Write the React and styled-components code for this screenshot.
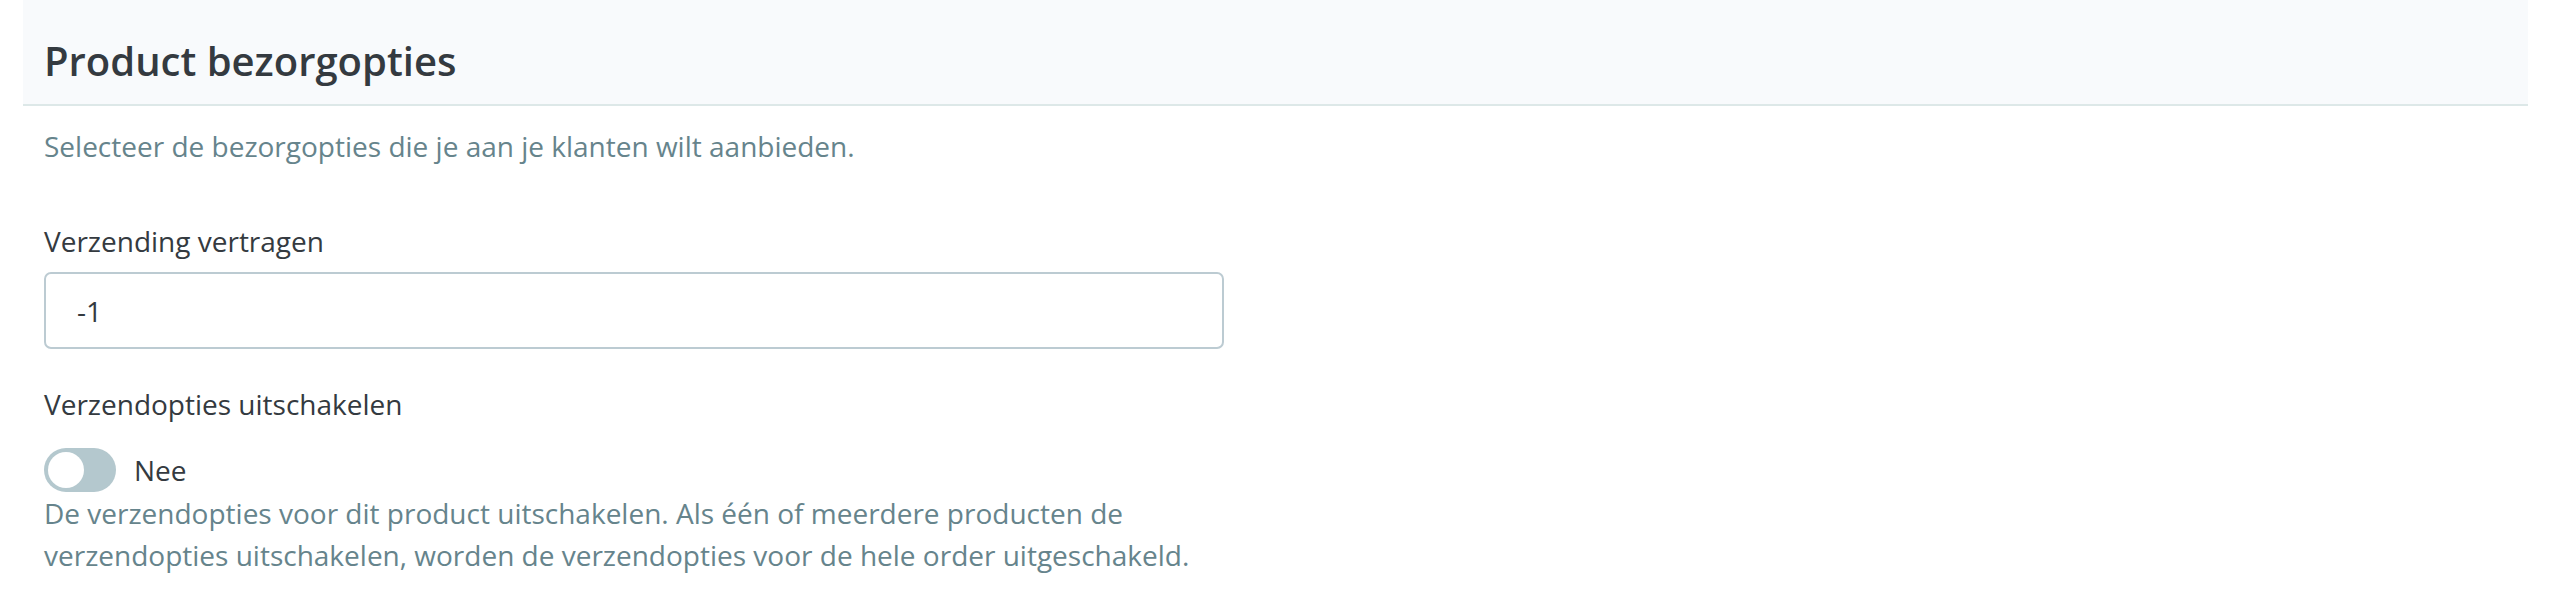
import React, { useState } from "react";
import styled, { createGlobalStyle } from "styled-components";

const GlobalStyle = createGlobalStyle`
  html, body {
    margin: 0;
    padding: 0;
    background: #ffffff;
  }
  body {
    font-family: "Open Sans", "Noto Sans", sans-serif;
    -webkit-font-smoothing: antialiased;
  }
`;

export default function App() {
  const [delay, setDelay] = useState("-1");
  const [disabled, setDisabled] = useState(false);

  return (
    <>
      <GlobalStyle />
      <Page>
        <Panel>
          <Header>
            <Title>Product bezorgopties</Title>
          </Header>
          <Body>
            <Intro>Selecteer de bezorgopties die je aan je klanten wilt aanbieden.</Intro>

            <Field>
              <Label htmlFor="delay">Verzending vertragen</Label>
              <Input
                id="delay"
                value={delay}
                onChange={(e) => setDelay(e.target.value)}
              />
            </Field>

            <Field $gap={23}>
              <Label as="div">Verzendopties uitschakelen</Label>
              <div>
                <ToggleRow>
                  <Toggle
                    type="button"
                    $on={disabled}
                    onClick={() => setDisabled((v) => !v)}
                    aria-pressed={disabled}
                  >
                    <Knob $on={disabled} />
                  </Toggle>
                  <ToggleText>{disabled ? "Ja" : "Nee"}</ToggleText>
                </ToggleRow>
                <Help>
                  De verzendopties voor dit product uitschakelen. Als één of meerdere producten de
                  verzendopties uitschakelen, worden de verzendopties voor de hele order uitgeschakeld.
                </Help>
              </div>
            </Field>
          </Body>
        </Panel>
      </Page>
    </>
  );
}

const Page = styled.div`
  padding: 0 28px 0 23px;
`;

const Panel = styled.section`
  display: flex;
  flex-direction: column;
`;

const Header = styled.div`
  height: 106px;
  box-sizing: border-box;
  padding: 37px 21px 0;
  background: #f8fafc;
  border-bottom: 2px solid #dde8e8;
`;

const Title = styled.h2`
  margin: 0;
  font-size: 40px;
  line-height: 1.2;
  font-weight: 600;
  color: #343a40;
`;

const Body = styled.div`
  display: flex;
  flex-direction: column;
  gap: 34px;
  padding: 19px 21px 0;
  width: 1180px;
`;

const Intro = styled.p`
  margin: 0 0 19px;
  font-size: 28px;
  line-height: 42px;
  color: #66848c;
`;

const Field = styled.div`
  display: flex;
  flex-direction: column;
  gap: ${(p) => p.$gap ?? 10}px;
`;

const Label = styled.label`
  font-size: 28px;
  line-height: 42px;
  color: #343a40;
`;

const Input = styled.input`
  box-sizing: border-box;
  width: 1180px;
  height: 77px;
  padding: 0 31px;
  border: 2px solid #bccbd2;
  border-radius: 7px;
  font-family: inherit;
  font-size: 28px;
  color: #343a40;
  background: #fff;
  outline: none;
`;

const ToggleRow = styled.div`
  display: flex;
  align-items: center;
  gap: 18px;
  height: 44px;
`;

const Toggle = styled.button`
  position: relative;
  width: 72px;
  height: 44px;
  padding: 0;
  border: none;
  border-radius: 22px;
  background: ${(p) => (p.$on ? "#3c9a8f" : "#b4c8ce")};
  cursor: pointer;
`;

const Knob = styled.span`
  position: absolute;
  top: 4px;
  left: ${(p) => (p.$on ? "32px" : "4px")};
  width: 36px;
  height: 36px;
  border-radius: 50%;
  background: #fff;
`;

const ToggleText = styled.span`
  font-size: 28px;
  line-height: 42px;
  color: #343a40;
`;

const Help = styled.p`
  margin: 0;
  font-size: 28px;
  line-height: 42px;
  color: #66848c;
`;
